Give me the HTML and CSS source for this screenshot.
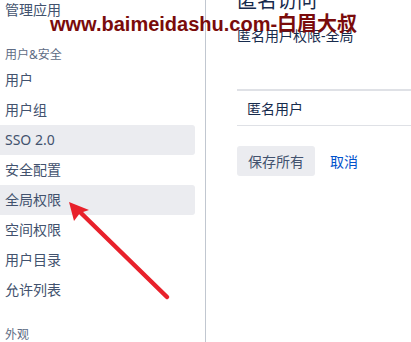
FILE: index.html
```html
<!DOCTYPE html>
<html lang="zh-CN">
<head>
<meta charset="utf-8">
<title>匿名访问</title>
<link rel="stylesheet" href="styles.css">
</head>
<body>
<div class="page">
  <aside class="sidebar">
    <a class="nav-item">管理应用</a>
    <div class="nav-heading">用户&amp;安全</div>
    <a class="nav-item">用户</a>
    <a class="nav-item">用户组</a>
    <a class="nav-item is-hover">SSO 2.0</a>
    <a class="nav-item">安全配置</a>
    <a class="nav-item is-active">全局权限</a>
    <a class="nav-item">空间权限</a>
    <a class="nav-item">用户目录</a>
    <a class="nav-item">允许列表</a>
    <div class="nav-heading">外观</div>
  </aside>
  <main class="content">
    <h1 class="title">匿名访问</h1>
    <h2 class="subtitle">匿名用户权限-全局</h2>
    <table class="perm-table">
      <tbody>
        <tr><td>匿名用户</td></tr>
      </tbody>
    </table>
    <div class="actions">
      <button class="btn">保存所有</button>
      <a class="link">取消</a>
    </div>
  </main>
</div>
<div class="watermark">www.baimeidashu.com-白眉大叔</div>
<svg class="arrow" width="411" height="342" viewBox="0 0 411 342">
  <line x1="167" y1="297" x2="81" y2="213" stroke="#e8212b" stroke-width="4.5" stroke-linecap="round"/>
  <polygon points="69,202 89,210 80,213 74,221" fill="#e8212b"/>
</svg>
</body>
</html>
```
FILE: styles.css
```css
html, body {
  margin: 0;
  padding: 0;
  background: #ffffff;
  overflow: hidden;
}
body {
  width: 411px;
  height: 342px;
  position: relative;
  font-family: "Noto Sans", "Noto Sans CJK SC", sans-serif;
  font-size: 14px;
  color: #172b4d;
}
.page {
  display: flex;
  margin-top: -5px;
  height: 347px;
  overflow: hidden;
}
.sidebar {
  width: 205px;
  flex: none;
  border-right: 1px solid #c1c7d0;
  display: flex;
  flex-direction: column;
}
.nav-item {
  display: block;
  width: 195px;
  height: 30px;
  line-height: 30px;
  padding-left: 5px;
  box-sizing: border-box;
  color: #42526e;
  border-radius: 0 3px 3px 0;
}
.nav-item.is-hover,
.nav-item.is-active {
  background: #ebecf0;
}
.nav-heading {
  padding-top: 20px;
  height: 20px;
  line-height: 20px;
  padding-left: 5px;
  font-size: 12px;
  color: #5e6c84;
}
.content {
  flex: 1;
  padding-left: 31px;
  padding-top: 0;
}
.title {
  margin: -8px 0 0;
  font-size: 20px;
  line-height: 28px;
  font-weight: 400;
  color: #172b4d;
}
.subtitle {
  margin: 11px 0 0;
  font-size: 14px;
  line-height: 20px;
  font-weight: 400;
  color: #172b4d;
}
.perm-table {
  margin-top: 43px;
  width: 100%;
  border-collapse: collapse;
  border-top: 2px solid #dfe1e6;
}
.perm-table td {
  height: 35px;
  padding: 0 0 0 10px;
  border-bottom: 1px solid #dfe1e6;
  box-sizing: border-box;
}
.actions {
  display: flex;
  align-items: center;
  gap: 15px;
  margin-top: 20px;
}
.btn {
  height: 30px;
  width: 78px;
  border: none;
  border-radius: 3px;
  background: #ebecf0;
  color: #42526e;
  font: inherit;
  padding: 0;
}
.link {
  color: #0052cc;
}
.watermark {
  position: absolute;
  left: 50px;
  top: 12px;
  line-height: 24px;
  font-family: "Liberation Sans", "Noto Sans CJK SC", sans-serif;
  font-size: 20px;
  font-weight: 700;
  color: #7a0b0b;
  white-space: nowrap;
}
.arrow {
  position: absolute;
  left: 0;
  top: 0;
  pointer-events: none;
}
```
